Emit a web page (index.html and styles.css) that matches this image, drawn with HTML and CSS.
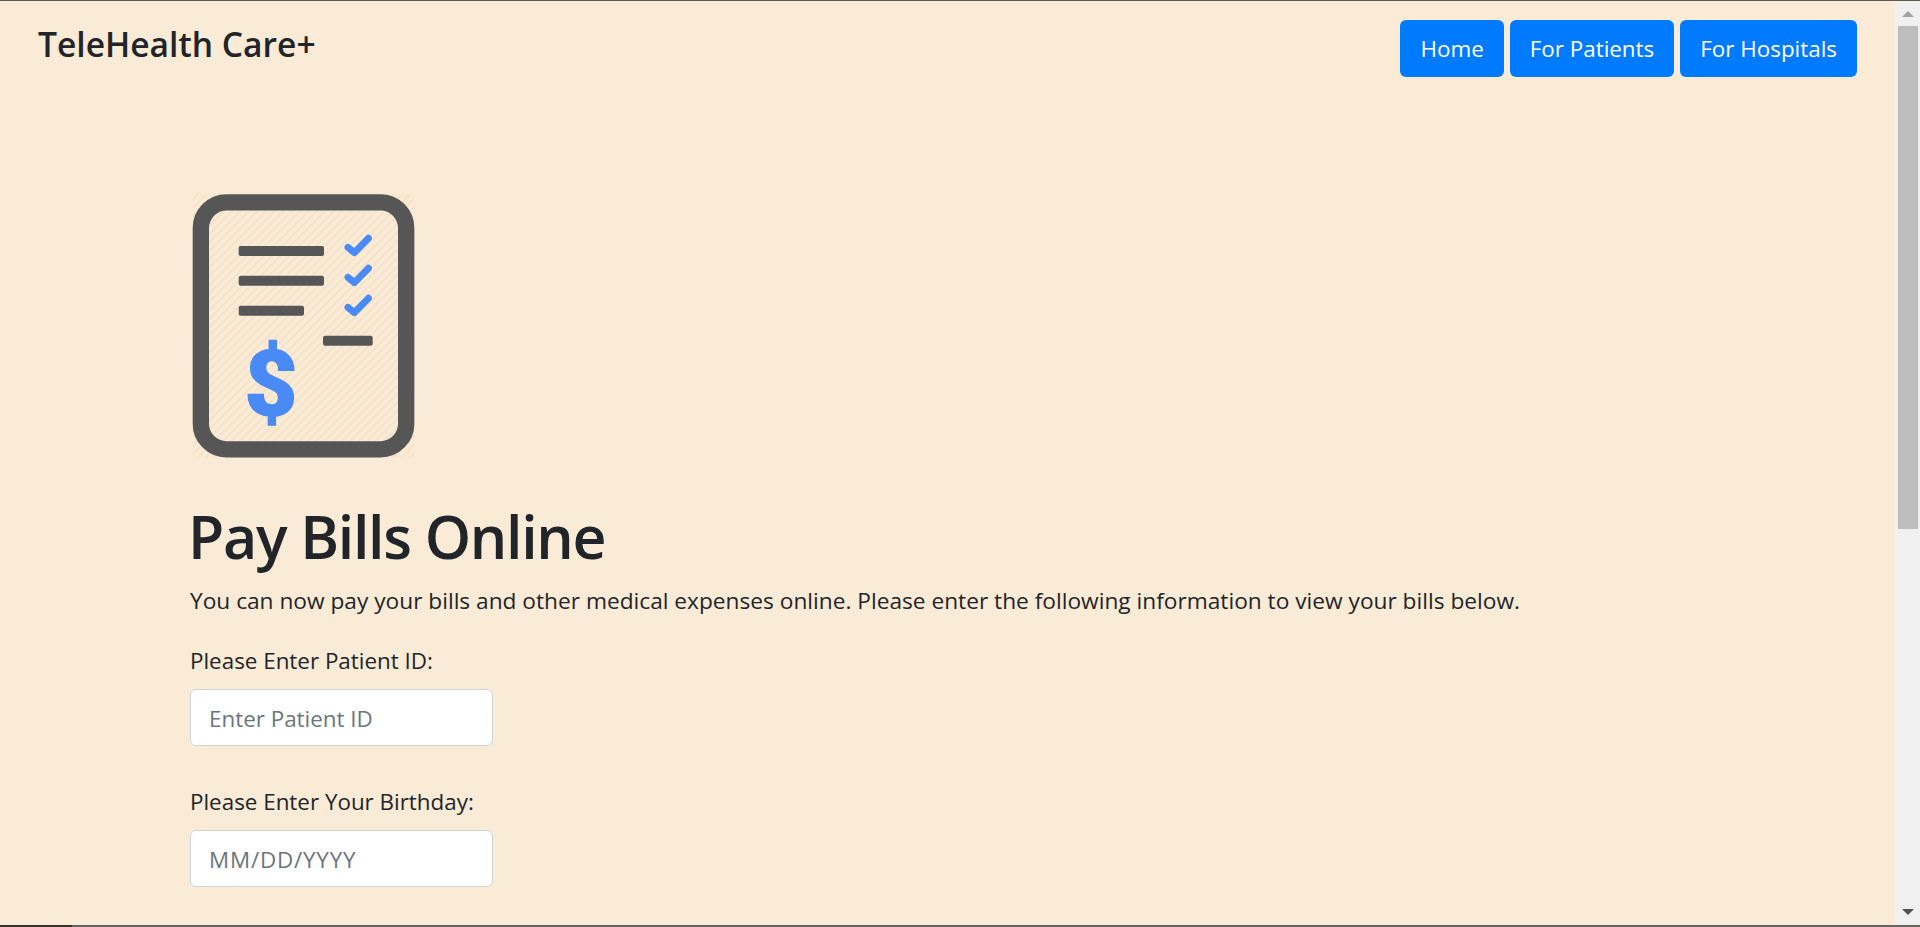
FILE: index.html
```html
<!DOCTYPE html>
<html lang="en">
<head>
<meta charset="utf-8">
<title>TeleHealth Care+ - Pay Bills Online</title>
<link rel="stylesheet" href="styles.css">
</head>
<body>
<div class="frame">
  <div class="page">
    <header class="topbar">
      <div class="brand">TeleHealth Care+</div>
      <nav class="nav">
        <a class="btn" href="#">Home</a>
        <a class="btn" href="#">For Patients</a>
        <a class="btn" href="#">For Hospitals</a>
      </nav>
    </header>
    <main class="content">
      <svg class="bill-icon" viewBox="60 60 680 810" role="img" aria-label="Bill with checklist and dollar sign">
        <defs>
          <pattern id="hatch" width="18" height="18" patternUnits="userSpaceOnUse" patternTransform="rotate(45)">
            <rect width="18" height="18" fill="#faebd7"/>
            <rect width="6" height="18" fill="#f6e2c9"/>
          </pattern>
        </defs>
        <rect x="68" y="72" width="665" height="790" fill="url(#hatch)"/>
        <rect class="sheet" x="92.5" y="97" width="616" height="741" rx="77"/>
        <g class="bars">
          <rect x="206" y="228" width="256" height="30" rx="6"/>
          <rect x="206" y="317" width="256" height="30" rx="6"/>
          <rect x="206" y="407" width="196" height="30" rx="6"/>
          <rect x="459" y="497" width="149" height="30" rx="6"/>
        </g>
        <g class="checks">
          <polyline points="534,232 553,248 595,205"/>
          <polyline points="534,322 553,338 595,295"/>
          <polyline points="534,412 553,428 595,385"/>
        </g>
        <text class="dollar" x="303" y="736" text-anchor="middle">$</text>
      </svg>
      <h1 class="title">Pay Bills Online</h1>
      <p class="lead">You can now pay your bills and other medical expenses online. Please enter the following information to view your bills below.</p>
      <form class="form">
        <div class="field">
          <label class="label" for="pid">Please Enter Patient ID:</label>
          <input class="input" id="pid" type="text" placeholder="Enter Patient ID">
        </div>
        <div class="field">
          <label class="label" for="dob">Please Enter Your Birthday:</label>
          <input class="input input-date" id="dob" type="text" placeholder="MM/DD/YYYY">
        </div>
      </form>
    </main>
  </div>
  <div class="scrollbar" aria-hidden="true">
    <div class="arrow arrow-up"></div>
    <div class="thumb"></div>
    <div class="track"></div>
    <div class="arrow arrow-down"></div>
  </div>
</div>
<div class="edge"><div class="edge-dark"></div></div>
</body>
</html>
```
FILE: styles.css
```css
* { box-sizing: border-box; }
html, body { margin: 0; height: 100%; overflow: hidden; }
body {
  display: flex;
  flex-direction: column;
  border-top: 1px solid #5b5a4e;
  background: #faebd7;
  color: #212529;
  font-family: "Open Sans", "Noto Sans", sans-serif;
  font-size: 22.4px;
  line-height: 1.5;
}
.frame { flex: 1; display: flex; min-height: 0; }
.page { flex: 1; min-width: 0; overflow: hidden; }
.topbar {
  display: flex;
  justify-content: space-between;
  align-items: flex-start;
  padding: 19px 38px 0 38px;
}
.brand { font-size: 33.6px; font-weight: 600; line-height: 48px; }
.nav { display: flex; gap: 6px; }
.btn {
  display: block;
  height: 57px;
  padding: 0 20px;
  border-radius: 6px;
  background: #007bff;
  color: #fff;
  font-size: 22.4px;
  line-height: 57px;
  text-decoration: none;
}
.content { padding: 112.5px 0 0 190px; }
.bill-icon { display: block; width: 226.7px; height: 270px; }
.sheet { fill: none; stroke: #565656; stroke-width: 49; }
.bars rect { fill: #565656; }
.checks polyline { fill: none; stroke: #4a8af4; stroke-width: 21; stroke-linecap: round; stroke-linejoin: round; }
.dollar { fill: #4a8af4; stroke: #4a8af4; stroke-width: 4; font-family: Roboto, sans-serif; font-weight: 900; font-size: 274px; }
.title { margin: 41.5px 0 0 -2px; font-size: 59px; font-weight: 600; letter-spacing: -1.3px; line-height: 1.2; }
.lead { margin: 12px 0 0; font-size: 22.7px; line-height: 34px; }
.form { margin-top: 26px; }
.field { margin-bottom: 39px; }
.label { display: block; line-height: 34px; margin-bottom: 11px; }
.input {
  display: block;
  width: 303px;
  height: 57px;
  padding: 2px 18px 0;
  border: 1px solid #ced4da;
  border-radius: 6px;
  background: #fff;
  color: #495057;
  font: inherit;
}
.input::placeholder { color: #6c757d; opacity: 1; }
.input-date::placeholder { letter-spacing: 0.8px; }
.scrollbar {
  width: 25px;
  display: flex;
  flex-direction: column;
  align-items: center;
  background: #f0f0f0;
}
.arrow { flex: none; width: 0; height: 0; border-left: 6px solid transparent; border-right: 6px solid transparent; }
.arrow-up { margin: 10px 0 9px; border-bottom: 6px solid #a3a3a3; }
.arrow-down { margin: 0 0 10px; border-top: 6px solid #505050; }
.thumb { flex: none; width: 20px; height: 503px; background: #bdbdbd; }
.track { flex: 1; }
.edge { height: 2px; background: #666460; flex: none; }
.edge-dark { width: 72px; height: 2px; background: #3a3328; }
```
